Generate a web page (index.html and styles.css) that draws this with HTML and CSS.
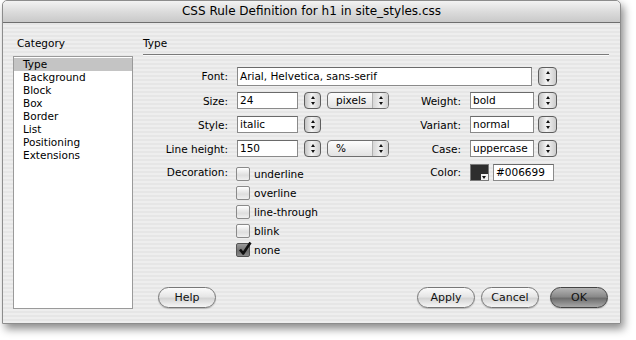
FILE: index.html
```html
<!DOCTYPE html>
<html lang="en">
<head>
  <meta charset="UTF-8">
  <title>CSS Rule Definition for h1 in site_styles.css</title>
  <link rel="stylesheet" href="styles.css">
</head>
<body>

<div class="window">
  <div class="titlebar">CSS Rule Definition for h1 in site_styles.css</div>

  <div class="dialog-body">
    <!-- left: category list -->
    <div class="sidebar">
      <div class="section-label">Category</div>
      <ul class="category-list">
        <li class="selected">Type</li>
        <li>Background</li>
        <li>Block</li>
        <li>Box</li>
        <li>Border</li>
        <li>List</li>
        <li>Positioning</li>
        <li>Extensions</li>
      </ul>
    </div>

    <!-- right: type settings -->
    <div class="panel">
      <div class="section-label panel-title">Type</div>

      <div class="type-form">
        <span class="field-label c1">Font:</span>
        <span class="text-field font-field">Arial, Helvetica, sans-serif</span>
        <span class="stepper tall c7"></span>

        <span class="field-label c1">Size:</span>
        <span class="text-field c2">24</span>
        <span class="stepper c3"></span>
        <span class="popup c4">pixels<span class="popup-arrows"></span></span>
        <span class="field-label c5">Weight:</span>
        <span class="text-field c6">bold</span>
        <span class="stepper c7"></span>

        <span class="field-label c1">Style:</span>
        <span class="text-field c2">italic</span>
        <span class="stepper c3"></span>
        <span class="field-label c5">Variant:</span>
        <span class="text-field c6">normal</span>
        <span class="stepper c7"></span>

        <span class="field-label c1">Line height:</span>
        <span class="text-field c2">150</span>
        <span class="stepper c3"></span>
        <span class="popup c4">%<span class="popup-arrows"></span></span>
        <span class="field-label c5">Case:</span>
        <span class="text-field c6">uppercase</span>
        <span class="stepper c7"></span>

        <span class="field-label top c1">Decoration:</span>
        <div class="checks">
          <label class="check"><span class="box"></span>underline</label>
          <label class="check"><span class="box"></span>overline</label>
          <label class="check"><span class="box"></span>line-through</label>
          <label class="check"><span class="box"></span>blink</label>
          <label class="check"><span class="box checked">
            <svg width="16" height="16" viewBox="0 0 16 16"><path d="M3 8.5 L6.2 12.5 L13.5 1.5" fill="none" stroke="#111" stroke-width="2.6" stroke-linejoin="round"/></svg>
          </span>none</label>
        </div>
        <span class="field-label top c5">Color:</span>
        <div class="color-group">
          <span class="swatch"><span class="swatch-arrow"></span></span>
          <span class="text-field color-field">#006699</span>
        </div>
      </div>

      <div class="button-row">
        <button class="aqua-btn">Help</button>
        <div class="button-right">
          <button class="aqua-btn">Apply</button>
          <button class="aqua-btn">Cancel</button>
          <button class="aqua-btn default">OK</button>
        </div>
      </div>
    </div>
  </div>
</div>

</body>
</html>
```

FILE: styles.css
```css
body {
  margin: 0;
  width: 636px;
  height: 340px;
  background: #fff;
  font-family: "DejaVu Sans", "Liberation Sans", sans-serif;
  font-size: 10.5px;
  color: #000;
  overflow: hidden;
}

.window {
  box-sizing: border-box;
  margin-left: 2px;
  width: 619px;
  height: 324px;
  border: 1px solid #8c8c8c;
  border-radius: 5px 5px 0 0;
  box-shadow: 3px 5px 9px rgba(0,0,0,0.45);
  background: repeating-linear-gradient(#eeeeee 0 2px, #e6e6e6 2px 4px);
  overflow: hidden;
}

.titlebar {
  height: 21px;
  line-height: 21px;
  text-align: center;
  font-size: 12px;
  border-bottom: 1px solid #6e6e6e;
  border-radius: 4px 4px 0 0;
  background: linear-gradient(#f3f3f3, #dcdcdc 50%, #c9c9c9);
}

.dialog-body {
  display: flex;
  gap: 10px;
  height: 300px;
  box-sizing: border-box;
  padding: 14px 11px 14px 10px;
}

.sidebar {
  width: 120px;
  display: flex;
  flex-direction: column;
}

.section-label {
  line-height: 13px;
  padding-left: 4px;
}

.category-list {
  flex: 1;
  margin: 6px 0 0;
  padding: 1px 0 0;
  list-style: none;
  background: #fff;
  border: 1px solid #9a9a9a;
}
.category-list li {
  line-height: 13px;
  padding-left: 9px;
}
.category-list li.selected {
  background: #c4c4c4;
  line-height: 12px;
  padding-bottom: 1px;
}

.panel {
  flex: 1;
  display: flex;
  flex-direction: column;
}

.panel-title {
  padding-left: 0;
  padding-bottom: 4px;
  border-bottom: 1px solid #7a7a7a;
  box-shadow: 0 1px 0 #fafafa;
}

/* form grid: label | field | stepper | popup | label | field | stepper */
.type-form {
  display: grid;
  grid-template-columns: 88px 61px 17px 62px 69px 64px 17px;
  grid-template-rows: 18px 17px 17px 17px auto;
  column-gap: 6px;
  row-gap: 7px;
  align-items: center;
  margin-top: 12px;
}
.c1 { grid-column: 1; }
.c2 { grid-column: 2; }
.c3 { grid-column: 3; }
.c4 { grid-column: 4; }
.c5 { grid-column: 5; }
.c6 { grid-column: 6; }
.c7 { grid-column: 7; margin-left: -2px; }

.field-label {
  text-align: right;
  padding-right: 3px;
}
.field-label.top { align-self: start; line-height: 17px; }

.text-field {
  box-sizing: border-box;
  height: 17px;
  line-height: 15px;
  padding-left: 2px;
  background: #fff;
  border: 1px solid #8a8a8a;
  border-top-color: #6a6a6a;
  white-space: nowrap;
  overflow: hidden;
}
.font-field {
  grid-column: 2 / 7;
  height: 19px;
  line-height: 17px;
  margin-right: 2px;
}

.stepper {
  position: relative;
  box-sizing: border-box;
  height: 17px;
  border: 1px solid #5e5e5e;
  border-radius: 4px;
  background: linear-gradient(90deg, #c4c4c4, #f4f4f4 45%, #cdcdcd);
}
.stepper.tall { height: 19px; }
.stepper::before,
.stepper::after,
.popup-arrows::before,
.popup-arrows::after {
  content: "";
  position: absolute;
  left: 50%;
  margin-left: -2px;
  border-left: 2px solid transparent;
  border-right: 2px solid transparent;
}
.stepper::before,
.popup-arrows::before { top: 3px; border-bottom: 3px solid #111; }
.stepper::after,
.popup-arrows::after { bottom: 3px; border-top: 3px solid #111; }

.popup {
  position: relative;
  box-sizing: border-box;
  height: 17px;
  line-height: 15px;
  padding-left: 8px;
  border: 1px solid #6e6e6e;
  border-radius: 4px;
  background: linear-gradient(#fdfdfd, #e2e2e2);
}
.popup-arrows {
  position: absolute;
  right: 0;
  top: 0;
  width: 15px;
  height: 15px;
  border-left: 1px solid #b0b0b0;
  border-radius: 0 3px 3px 0;
  background: linear-gradient(90deg, #d6d6d6, #f0f0f0 50%, #d0d0d0);
}

.checks {
  grid-column: 2 / 5;
  align-self: start;
  display: flex;
  flex-direction: column;
}
.check {
  display: flex;
  align-items: center;
  gap: 4px;
  height: 19px;
  margin-left: -1px;
}
.box {
  position: relative;
  box-sizing: border-box;
  width: 14px;
  height: 14px;
  border: 1px solid #8a8a8a;
  border-radius: 2px;
  background: linear-gradient(#ffffff, #dedede 60%, #f0f0f0);
}
.box.checked {
  border-color: #555;
  background: linear-gradient(#9a9a9a, #6f6f6f 60%, #8a8a8a);
}
.box svg {
  position: absolute;
  left: 0;
  top: -3px;
}

.color-group {
  grid-column: 6 / 8;
  align-self: start;
  display: flex;
  gap: 4px;
  margin-left: 0;
}
.swatch {
  position: relative;
  box-sizing: border-box;
  width: 19px;
  height: 17px;
  border: 1px solid #7a7a7a;
  background: #2e2e2e;
}
.swatch-arrow {
  position: absolute;
  right: 0;
  bottom: 0;
  width: 7px;
  height: 6px;
  background: #f2f2f2;
}
.swatch-arrow::after {
  content: "";
  position: absolute;
  left: 1px;
  top: 2px;
  border-left: 2.5px solid transparent;
  border-right: 2.5px solid transparent;
  border-top: 3px solid #111;
}
.color-field {
  width: 61px;
}

.button-row {
  margin-top: auto;
  margin-bottom: 1px;
  display: flex;
  justify-content: space-between;
  padding: 0 1px 0 15px;
}
.button-right {
  display: flex;
  gap: 6px;
}
.aqua-btn {
  box-sizing: border-box;
  width: 58px;
  height: 21px;
  padding: 0;
  font-family: inherit;
  font-size: 11px;
  color: #111;
  border: 1px solid #777;
  border-radius: 11px;
  background: linear-gradient(#fbfbfb, #e6e6e6 45%, #d4d4d4 55%, #f6f6f6);
  box-shadow: 0 1px 1px rgba(0,0,0,0.2);
}
.aqua-btn.default {
  margin-left: 5px;
  border-color: #444;
  background: linear-gradient(#b4b4b4, #8a8a8a 45%, #6e6e6e 55%, #a8a8a8);
}
```
